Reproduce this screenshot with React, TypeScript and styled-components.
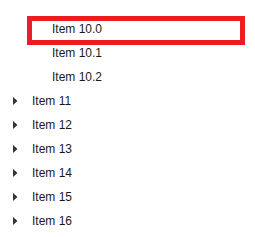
import styled, { createGlobalStyle } from 'styled-components';

const GlobalStyle = createGlobalStyle`
  html, body {
    margin: 0;
    padding: 0;
    background: #ffffff;
  }
  body {
    font-family: 'Liberation Sans', Arial, sans-serif;
    font-size: 12px;
    color: #1a1a1a;
  }
`;

const Tree = styled.ul`
  list-style: none;
  margin: 0;
  padding: 17px 0 0 0;
  width: 255px;
  height: 237px;
  box-sizing: border-box;
  overflow: hidden;
`;

const Row = styled.li<{ $level: number; $selected?: boolean }>`
  position: relative;
  display: flex;
  align-items: center;
  height: 24px;
  padding-left: ${({ $level }) => 12 + $level * 20}px;

  ${({ $selected }) =>
    $selected &&
    `
    &::after {
      content: '';
      position: absolute;
      left: 27px;
      right: 10px;
      top: -1px;
      bottom: -4px;
      border: 5px solid #ec1c24;
      pointer-events: none;
    }
  `}
`;

const Expander = styled.span`
  display: flex;
  align-items: center;
  justify-content: flex-start;
  width: 20px;
  height: 24px;
  padding-left: 1px;
  box-sizing: border-box;
`;

const Label = styled.span`
  line-height: 24px;
  white-space: nowrap;
`;

const Arrow = () => (
  <svg width="5" height="8" viewBox="0 0 5 8">
    <polygon points="0,0 4.5,4 0,8" fill="#333333" />
  </svg>
);

type Node = { label: string; level: number; hasChildren: boolean; selected?: boolean };

const nodes: Node[] = [
  { label: 'Item 10.0', level: 1, hasChildren: false, selected: true },
  { label: 'Item 10.1', level: 1, hasChildren: false },
  { label: 'Item 10.2', level: 1, hasChildren: false },
  { label: 'Item 11', level: 0, hasChildren: true },
  { label: 'Item 12', level: 0, hasChildren: true },
  { label: 'Item 13', level: 0, hasChildren: true },
  { label: 'Item 14', level: 0, hasChildren: true },
  { label: 'Item 15', level: 0, hasChildren: true },
  { label: 'Item 16', level: 0, hasChildren: true },
];

export default function App() {
  return (
    <>
      <GlobalStyle />
      <Tree>
        {nodes.map((n) => (
          <Row key={n.label} $level={n.level} $selected={n.selected}>
            <Expander>{n.hasChildren && <Arrow />}</Expander>
            <Label>{n.label}</Label>
          </Row>
        ))}
      </Tree>
    </>
  );
}
